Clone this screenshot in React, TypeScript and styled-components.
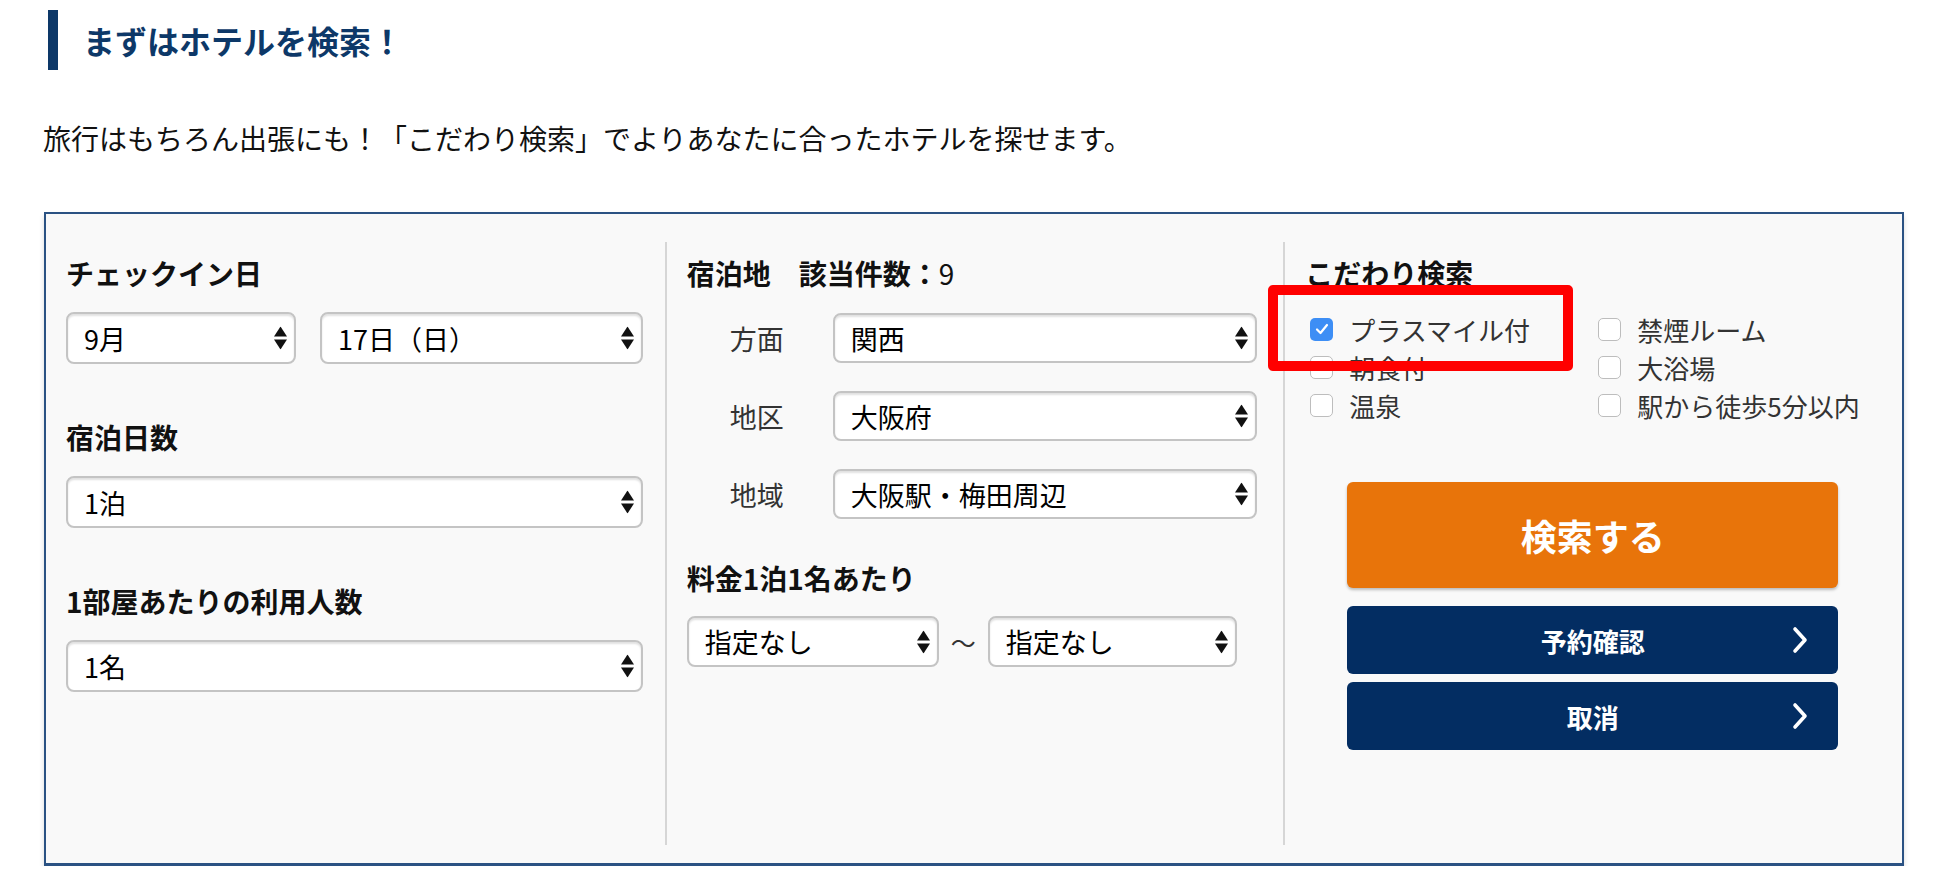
import React from 'react'
import styled, { createGlobalStyle } from 'styled-components'

const GlobalStyle = createGlobalStyle`
  html, body {
    margin: 0;
    padding: 0;
    background: #fff;
  }
  body {
    font-family: "Noto Sans CJK JP", "Noto Sans", sans-serif;
    color: #111;
  }
  * {
    box-sizing: border-box;
  }
`

const Page = styled.div`
  padding: 10px 44px 0 44px;
`

const Heading = styled.h2`
  margin: 0 0 0 4px;
  height: 60px;
  border-left: 10px solid #0d3868;
  padding-left: 25px;
  font-size: 32px;
  line-height: 60px;
  font-weight: 700;
  color: #0d3868;
`

const Intro = styled.p`
  margin: 48px 0 54px -1px;
  font-size: 28px;
  line-height: 40px;
  color: #111;
`

const Panel = styled.div`
  display: grid;
  grid-template-columns: repeat(3, 1fr);
  border: 2px solid #2b5283;
  border-bottom-width: 3px;
  background: #f9f9f9;
  padding: 28px 0 18px;
  box-shadow: 0 4px 5px rgba(0, 0, 0, 0.15);
`

const Column = styled.div<{ $divider?: boolean }>`
  position: relative;
  min-height: 603px;
  padding: 11px 22px 0 20px;
  border-left: ${p => (p.$divider ? '2px solid #d6d6d6' : 'none')};
`

const Label = styled.div<{ $mb?: number; $mt?: number }>`
  font-size: 28px;
  font-weight: 700;
  line-height: 40px;
  color: #111;
  margin-top: ${p => p.$mt ?? 0}px;
  margin-bottom: ${p => p.$mb ?? 19}px;
`

const Regular = styled.span`
  font-weight: 400;
`

const Section = styled.div`
  margin-bottom: 53px;
`

const Row = styled.div<{ $gap?: number }>`
  display: flex;
  align-items: center;
  gap: ${p => p.$gap ?? 24}px;
`

const SelectWrap = styled.div<{ $w?: number }>`
  position: relative;
  flex: ${p => (p.$w ? `0 0 ${p.$w}px` : '1 1 auto')};
`

const SelectField = styled.select<{ $h?: number }>`
  appearance: none;
  -webkit-appearance: none;
  display: block;
  width: 100%;
  height: ${p => p.$h ?? 52}px;
  border: 2px solid #c4c4c4;
  border-radius: 8px;
  background: #fff;
  box-shadow: inset 0 2px 2px rgba(0, 0, 0, 0.12);
  padding: 0 40px 0 16px;
  font-family: inherit;
  font-size: 27px;
  color: #000;
  outline: none;
`

const Arrows = styled.svg`
  position: absolute;
  right: 9px;
  top: 50%;
  transform: translateY(-50%);
  pointer-events: none;
`

const AreaList = styled.div`
  display: flex;
  flex-direction: column;
  gap: 28px;
  margin-bottom: 39px;
`

const AreaRow = styled.div`
  display: flex;
  align-items: center;
  padding: 0 4px 0 43px;
`

const AreaLabel = styled.span`
  flex: 0 0 103px;
  font-size: 27px;
  color: #333;
`

const Tilde = styled.span`
  font-size: 25px;
  color: #333;
`

const CheckGrid = styled.div`
  display: grid;
  grid-template-columns: 288px 1fr;
  grid-auto-rows: 38px;
  padding-left: 5px;
`

const CheckItem = styled.label`
  display: flex;
  align-items: center;
  gap: 16px;
  font-size: 26px;
  color: #333;
  white-space: nowrap;
`

const Box = styled.span<{ $on?: boolean }>`
  display: flex;
  align-items: center;
  justify-content: center;
  width: 23px;
  height: 23px;
  border-radius: 5px;
  border: ${p => (p.$on ? 'none' : '1.5px solid #bdbdbd')};
  background: ${p => (p.$on ? '#3d8ef5' : '#fff')};
`

const Buttons = styled.div`
  width: 491px;
  margin: 58px auto 0;
`

const SearchButton = styled.button`
  display: block;
  width: 100%;
  height: 106px;
  border: none;
  border-radius: 6px;
  background: #e8740a;
  box-shadow: 0 2px 3px rgba(0, 0, 0, 0.25);
  color: #fff;
  font-family: inherit;
  font-size: 36px;
  font-weight: 700;
  margin-bottom: 18px;
`

const NavButton = styled.button`
  position: relative;
  display: block;
  width: 100%;
  height: 68px;
  border: none;
  border-radius: 6px;
  background: #032d62;
  color: #fff;
  font-family: inherit;
  font-size: 26px;
  font-weight: 700;
  margin-bottom: 8px;
`

const Chevron = styled.svg`
  position: absolute;
  right: 29px;
  top: 50%;
  transform: translateY(-50%);
`

const Highlight = styled.div`
  position: absolute;
  left: -17px;
  top: 43px;
  width: 305px;
  height: 86px;
  border: 10px solid #ff0000;
  border-radius: 5px;
  pointer-events: none;
`

function Select({ value, w, h }: { value: string; w?: number; h?: number }) {
  return (
    <SelectWrap $w={w}>
      <SelectField $h={h} defaultValue={value}>
        <option value={value}>{value}</option>
      </SelectField>
      <Arrows width="13" height="23" viewBox="0 0 13 23">
        <polygon points="6.5,0 13,10 0,10" fill="#111" />
        <polygon points="0,13 13,13 6.5,23" fill="#111" />
      </Arrows>
    </SelectWrap>
  )
}

function Check({ label, on }: { label: string; on?: boolean }) {
  return (
    <CheckItem>
      <Box $on={on}>
        {on && (
          <svg width="14" height="12" viewBox="0 0 14 12">
            <polyline points="2,6.5 5.5,10 12,2" fill="none" stroke="#fff" strokeWidth="2.2" strokeLinecap="round" strokeLinejoin="round" />
          </svg>
        )}
      </Box>
      {label}
    </CheckItem>
  )
}

function NavChevron() {
  return (
    <Chevron width="18" height="28" viewBox="0 0 18 28">
      <polyline points="4,3 14,14 4,25" fill="none" stroke="#fff" strokeWidth="3.6" strokeLinecap="round" strokeLinejoin="round" />
    </Chevron>
  )
}

export default function App() {
  return (
    <Page>
      <GlobalStyle />
      <Heading>まずはホテルを検索！</Heading>
      <Intro>旅行はもちろん出張にも！「こだわり検索」でよりあなたに合ったホテルを探せます。</Intro>

      <Panel>
        <Column>
          <Section>
            <Label>チェックイン日</Label>
            <Row>
              <Select value="9月" w={230} />
              <Select value="17日（日）" />
            </Row>
          </Section>
          <Section>
            <Label>宿泊日数</Label>
            <Select value="1泊" />
          </Section>
          <Section>
            <Label>1部屋あたりの利用人数</Label>
            <Select value="1名" />
          </Section>
        </Column>

        <Column $divider>
          <Label $mb={20}>
            宿泊地　該当件数：<Regular>9</Regular>
          </Label>
          <AreaList>
            <AreaRow>
              <AreaLabel>方面</AreaLabel>
              <Select value="関西" h={50} />
            </AreaRow>
            <AreaRow>
              <AreaLabel>地区</AreaLabel>
              <Select value="大阪府" h={50} />
            </AreaRow>
            <AreaRow>
              <AreaLabel>地域</AreaLabel>
              <Select value="大阪駅・梅田周辺" h={50} />
            </AreaRow>
          </AreaList>
          <Label $mb={18}>料金1泊1名あたり</Label>
          <Row $gap={12}>
            <Select value="指定なし" w={252} h={51} />
            <Tilde>〜</Tilde>
            <Select value="指定なし" w={249} h={51} />
          </Row>
        </Column>

        <Column $divider>
          <Label $mb={17}>こだわり検索</Label>
          <CheckGrid>
            <Check label="プラスマイル付" on />
            <Check label="禁煙ルーム" />
            <Check label="朝食付" />
            <Check label="大浴場" />
            <Check label="温泉" />
            <Check label="駅から徒歩5分以内" />
          </CheckGrid>
          <Buttons>
            <SearchButton>検索する</SearchButton>
            <NavButton>
              予約確認
              <NavChevron />
            </NavButton>
            <NavButton>
              取消
              <NavChevron />
            </NavButton>
          </Buttons>
          <Highlight />
        </Column>
      </Panel>
    </Page>
  )
}
